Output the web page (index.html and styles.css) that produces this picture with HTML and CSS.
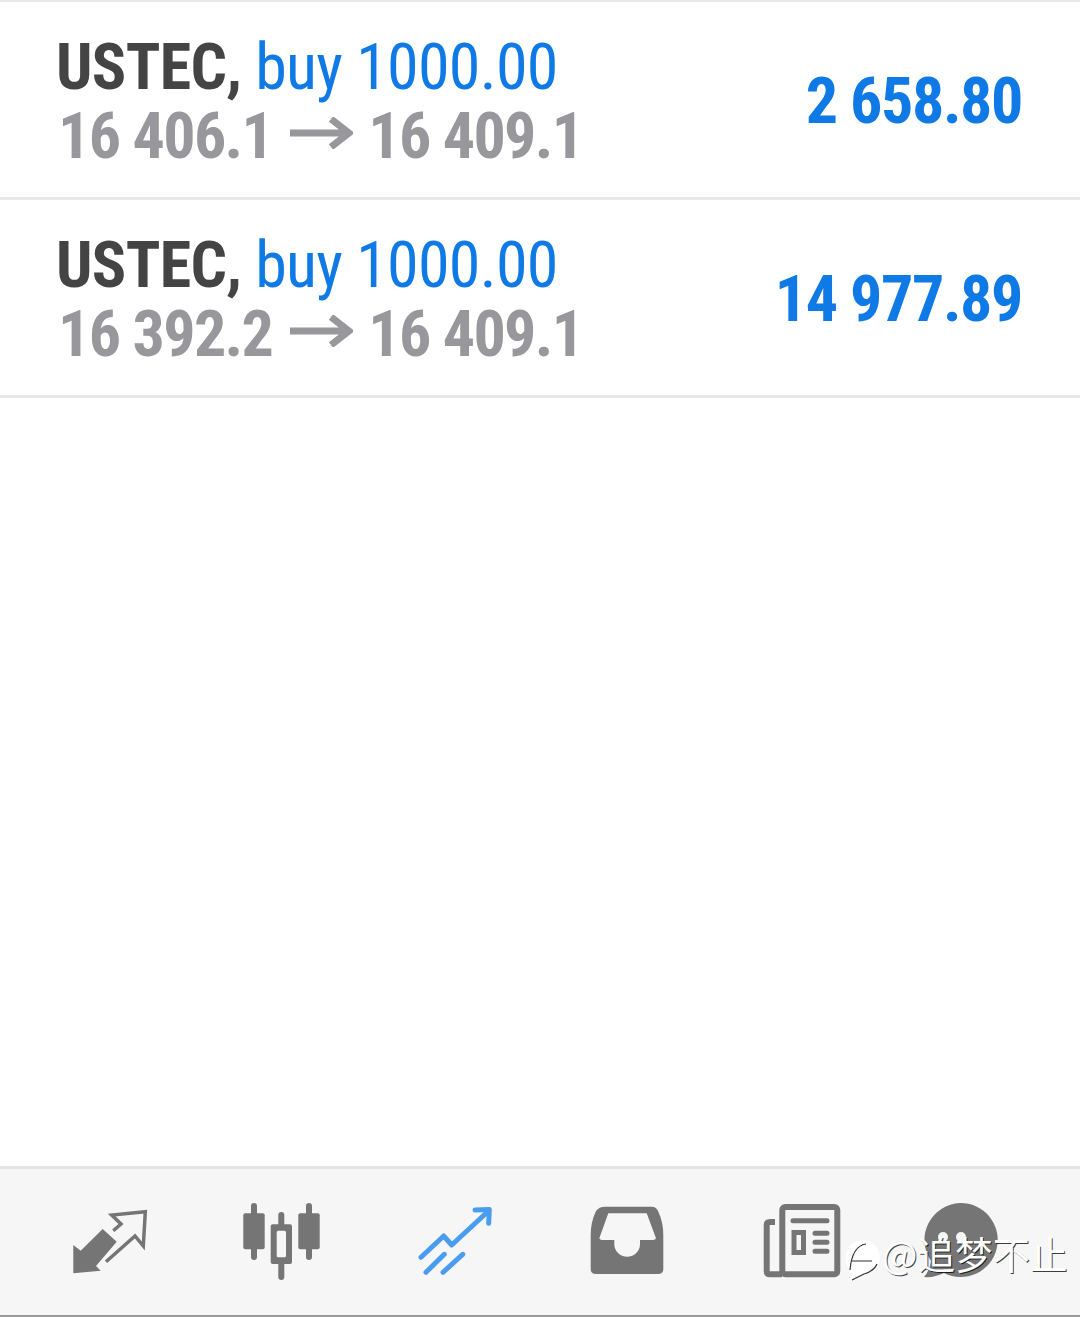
FILE: index.html
```html
<!DOCTYPE html>
<html lang="en">
<head>
    <meta charset="UTF-8">
    <meta name="viewport" content="width=device-width, initial-scale=1.0">
    <title>Trade history</title>
    <link rel="stylesheet" href="styles.css">
</head>
<body>
    <div class="app">
        <div class="list">
            <div class="row">
                <div class="info">
                    <div class="line"><b class="symbol">USTEC,</b> <span class="side">buy 1000.00</span></div>
                    <div class="line prices"><b>16 406.1</b><svg class="arrow" viewBox="0 0 63 32"><path d="M0 16 H59 M41 2 L59 16 L41 30"/></svg><b>16 409.1</b></div>
                </div>
                <div class="profit">2 658.80</div>
            </div>
            <div class="row">
                <div class="info">
                    <div class="line"><b class="symbol">USTEC,</b> <span class="side">buy 1000.00</span></div>
                    <div class="line prices"><b>16 392.2</b><svg class="arrow" viewBox="0 0 63 32"><path d="M0 16 H59 M41 2 L59 16 L41 30"/></svg><b>16 409.1</b></div>
                </div>
                <div class="profit">14 977.89</div>
            </div>
        </div>

        <div class="tabs">
            <svg class="icon first" viewBox="0 0 80 80">
                <path class="solid" d="M3.3 43 L3.3 71.3 L30.7 68.7 L26 64 L46.7 39.7 L32.7 27 L10.7 48.7 Z"/>
                <path class="outline" d="M36 59.7 L65 34 L73.3 44 L75.3 9.7 L41.7 13 L51 22 L43.3 28.7"/>
            </svg>
            <svg class="icon" viewBox="0 0 80 80">
                <path class="wick" d="M13 4 V55 M40.3 13 V75 M68 4 V55"/>
                <rect class="solid" x="2.3" y="11.3" width="21.4" height="36" rx="2"/>
                <rect class="solid" x="57.3" y="11.3" width="21.4" height="36" rx="2"/>
                <rect class="solid" x="29.7" y="22.3" width="21.3" height="39.7" rx="2"/>
                <rect class="hole" x="35.7" y="28.7" width="9.3" height="26.6" rx="1.5"/>
            </svg>
            <svg class="icon active" viewBox="0 0 80 80">
                <path d="M6 55.3 L28.7 34 L36.7 43 L74 8.5 M60 8 L74.3 7.5 L73.7 21.3 M11 70.3 L29.3 52.3 M28 70.3 L47.7 52.3"/>
            </svg>
            <svg class="icon" viewBox="0 0 80 80">
                <path class="solid" fill-rule="evenodd" d="M17 4.7 H63.7 Q68 4.7 70 9 Q75.3 20 75.3 33 V67 Q75.3 72 70 72 H8 Q2.7 72 2.7 67 V33 Q2.7 20 8 9 Q11 4.7 17 4.7 Z M20.3 11.3 L11.3 36.3 Q12 38 14 38 H26.3 V42 A12.8 12.8 0 0 0 52 42 V38 H65 Q67.5 38 68 36.3 L58.7 11.3 Z"/>
            </svg>
            <svg class="icon" viewBox="0 0 80 80">
                <rect class="frame" x="20.3" y="5" width="55" height="67.3" rx="3"/>
                <path class="frame" d="M13 20 H8 Q4.7 20 4.7 23 V69 Q4.7 72.3 8 72.3 H20"/>
                <path class="wick thin" d="M31 18.7 H65 M53 31.3 H65 M53 40.3 H65 M53 49.3 H65"/>
                <rect class="boxed" x="32" y="30.5" width="9.5" height="20"/>
            </svg>
            <svg class="icon chat" viewBox="0 0 80 80">
                <path class="solid" d="M40 1 A37 37 0 1 1 24 71 Q14 76 4 75 Q10 68 11 59 A37 37 0 0 1 40 1 Z"/>
                <circle class="hole" cx="23" cy="35" r="5"/>
                <circle class="hole" cx="41" cy="35" r="5"/>
            </svg>
        </div>

        <div class="watermark">
            <svg class="mark" viewBox="0 0 40 44">
                <path class="blob" d="M20 2 A18 18 0 0 1 36 28 Q30 36 18 36 L6 43 L10 34 A18 18 0 0 1 20 2 Z"/>
                <path class="swirl" d="M8 32 Q10 8 24 6 M10 23 H30 M10 42 L22 36 Q32 33 35 26"/>
            </svg>
            <span>@追梦不止</span>
        </div>
    </div>
</body>
</html>
```

FILE: styles.css
```css
body{
    margin: 0;
    background: #fff;
    font-family: Roboto, "Liberation Sans", sans-serif;
}

.app{
    position: relative;
    width: 1080px;
    height: 1317px;
    display: flex;
    flex-direction: column;
    justify-content: space-between;
    overflow: hidden;
}

.list{
    border-top: 2px solid #e8e8e8;
}

.row{
    height: 195px;
    padding: 0 58px 0 56px;
    display: flex;
    justify-content: space-between;
    align-items: center;
    border-bottom: 3px solid #e8e8e8;
}

.info{
    padding-top: 4px;
    font-size: 64px;
    line-height: 69px;
    font-stretch: condensed;
    letter-spacing: -0.7px;
}

.line{
    white-space: nowrap;
}

.symbol{
    color: #444;
}

.side{
    color: #0f7ae5;
}

.prices{
    padding-left: 2px;
    color: #98989c;
    letter-spacing: -1.65px;
}

.arrow{
    width: 63px;
    height: 32px;
    margin: 0 15px 0 18px;
    vertical-align: 9px;
}

.arrow path{
    fill: none;
    stroke: #98989c;
    stroke-width: 7;
}

.profit{
    padding-top: 4px;
    font-size: 64px;
    font-weight: bold;
    font-stretch: condensed;
    letter-spacing: -1.4px;
    color: #0f7ae5;
}

.tabs{
    height: 146px;
    padding: 0 30px 0 70px;
    display: flex;
    gap: 93.4px;
    align-items: flex-start;
    background: #f6f6f6;
    border-top: 3px solid #e4e4e4;
    border-bottom: 2px solid #9a9a9a;
}

.icon{
    width: 80px;
    height: 80px;
    margin-top: 33px;
    flex: none;
}

.first{
    margin-right: -2px;
}

.chat{
    margin-left: -14.6px;
}

.solid{
    fill: #757575;
}

.outline{
    fill: none;
    stroke: #757575;
    stroke-width: 3.5;
}

.wick{
    fill: none;
    stroke: #757575;
    stroke-width: 6;
    stroke-linecap: round;
}

.wick.thin{
    stroke-width: 5;
}

.hole{
    fill: #f6f6f6;
}

.frame{
    fill: none;
    stroke: #757575;
    stroke-width: 6;
}

.boxed{
    fill: none;
    stroke: #757575;
    stroke-width: 5;
}

.active path{
    fill: none;
    stroke: #4a9cf0;
    stroke-width: 5;
    stroke-linecap: round;
    stroke-linejoin: round;
}

.watermark{
    position: absolute;
    left: 842px;
    top: 1228px;
    display: flex;
    align-items: flex-start;
    font-family: "Noto Sans CJK SC", sans-serif;
    font-size: 37.5px;
    line-height: 50px;
    color: #fff;
    text-shadow: 1px 1px 0 rgba(0,0,0,0.75);
}

.mark{
    width: 40px;
    height: 44px;
    margin-top: 10px;
}

.blob{
    fill: #fff;
}

.swirl{
    fill: none;
    stroke: #333;
    stroke-width: 1.2;
}
```
